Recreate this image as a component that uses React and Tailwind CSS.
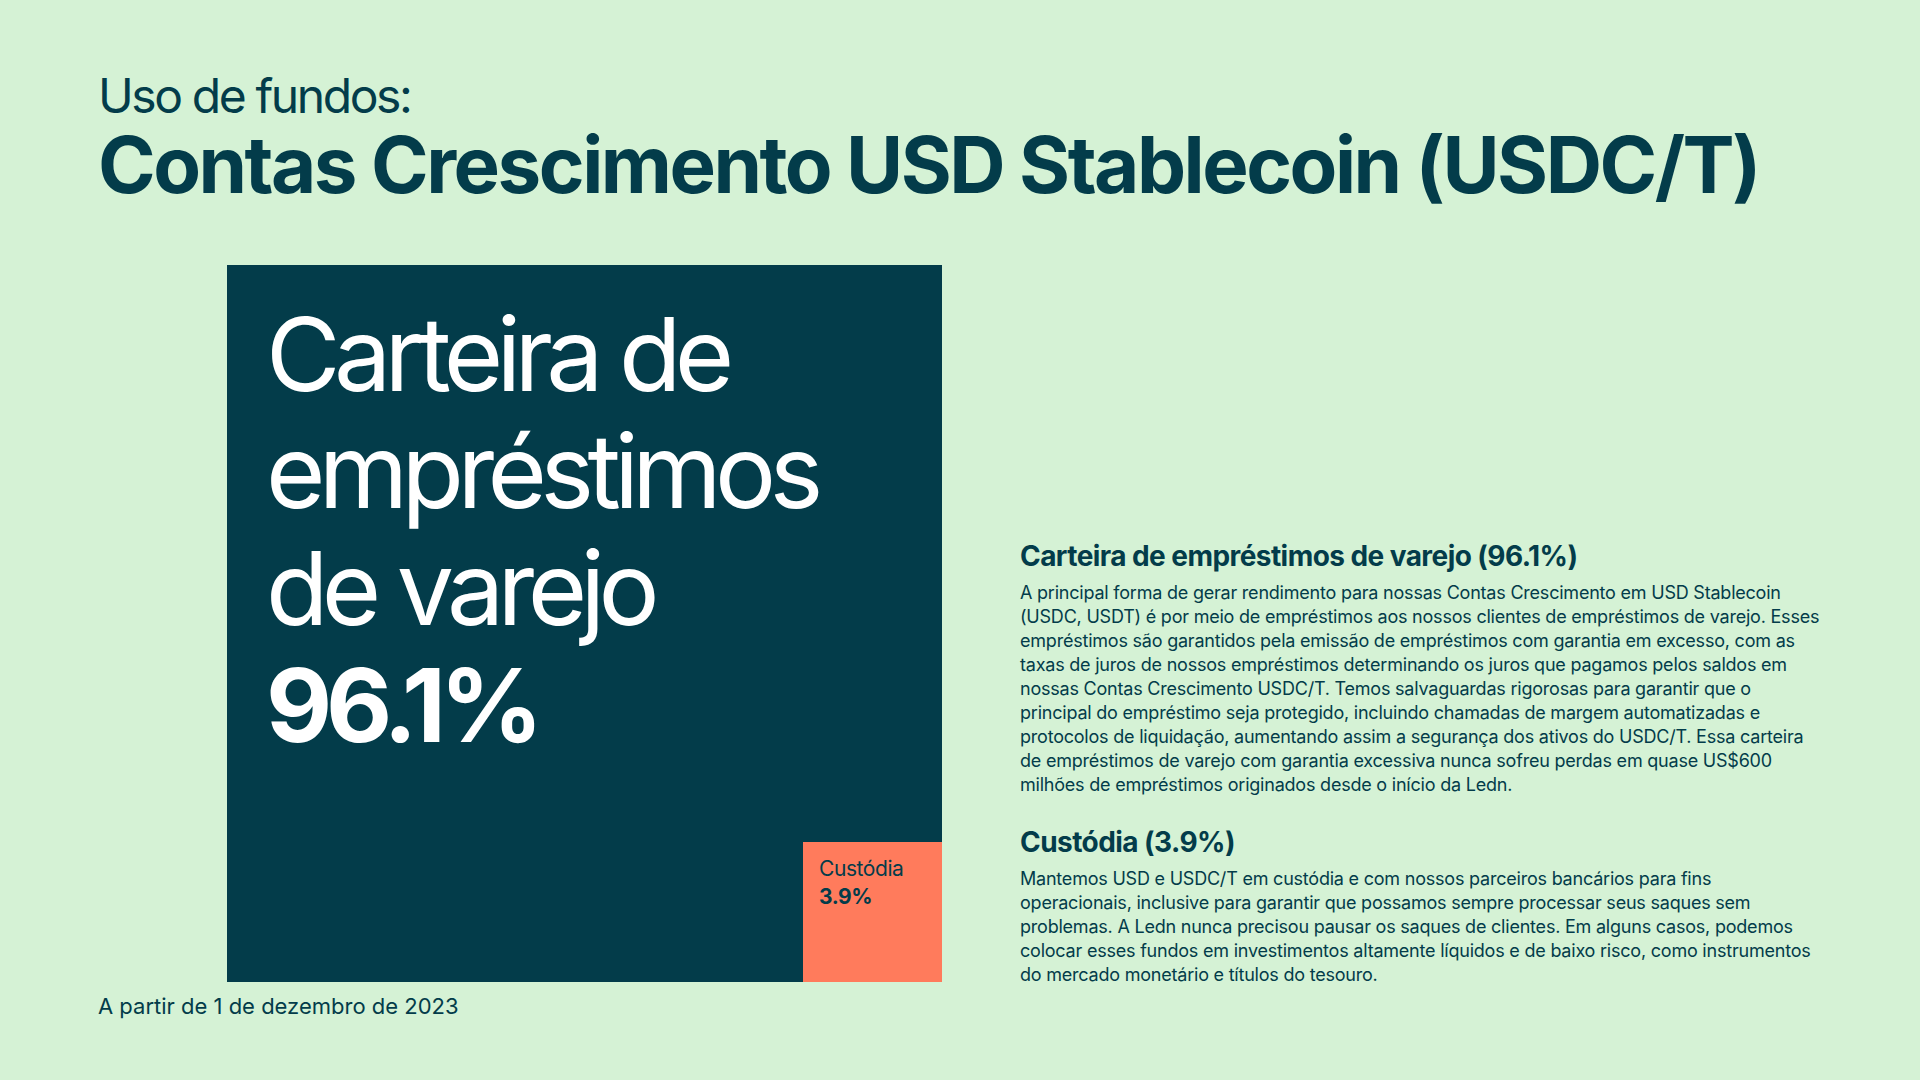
const inter = { fontFamily: "Inter, 'Liberation Sans', sans-serif" };

const paragraphOne = [
  "A principal forma de gerar rendimento para nossas Contas Crescimento em USD Stablecoin",
  "(USDC, USDT) é por meio de empréstimos aos nossos clientes de empréstimos de varejo. Esses",
  "empréstimos são garantidos pela emissão de empréstimos com garantia em excesso, com as",
  "taxas de juros de nossos empréstimos determinando os juros que pagamos pelos saldos em",
  "nossas Contas Crescimento USDC/T. Temos salvaguardas rigorosas para garantir que o",
  "principal do empréstimo seja protegido, incluindo chamadas de margem automatizadas e",
  "protocolos de liquidação, aumentando assim a segurança dos ativos do USDC/T. Essa carteira",
  "de empréstimos de varejo com garantia excessiva nunca sofreu perdas em quase US$600",
  "milhões de empréstimos originados desde o início da Ledn.",
];

const paragraphTwo = [
  "Mantemos USD e USDC/T em custódia e com nossos parceiros bancários para fins",
  "operacionais, inclusive para garantir que possamos sempre processar seus saques sem",
  "problemas. A Ledn nunca precisou pausar os saques de clientes. Em alguns casos, podemos",
  "colocar esses fundos em investimentos altamente líquidos e de baixo risco, como instrumentos",
  "do mercado monetário e títulos do tesouro.",
];

const Lines = ({ lines }) => (
  <p className="mt-2 text-[18px] leading-[24px] tracking-[-0.012em] text-[#033c4a]">
    {lines.map((line, i) => (
      <span key={i} className="block whitespace-nowrap">
        {line}
      </span>
    ))}
  </p>
);

const App = () => {
  return (
    <section
      className="w-[1920px] h-[1080px] bg-[#d5f2d5] text-[#033c4a] pl-[98px] pt-[70px] overflow-hidden"
      style={inter}
    >
      <h2 className="text-[48px] leading-[52px] tracking-[-0.05em]">Uso de fundos:</h2>
      <h1 className="mt-[3px] text-[78px] leading-[80px] font-bold tracking-[-0.032em] whitespace-nowrap">
        Contas Crescimento USD Stablecoin (USDC/T)
      </h1>

      <div className="flex mt-[60px]">
        <div className="ml-[129px]">
          <div className="w-[715px] h-[717px] bg-[#033c4a] flex flex-col">
            <div className="pl-[39px] pt-[31px] text-white text-[102px] leading-[117px] tracking-[-0.065em]">
              <div>Carteira de</div>
              <div>empréstimos</div>
              <div>de varejo</div>
              <div className="font-bold tracking-[-0.06em]">96.1%</div>
            </div>
            <div className="mt-auto self-end w-[139px] h-[140px] bg-[#ff7b5c] px-4 pt-[13px] text-[21px] leading-[28px] tracking-[-0.02em] text-[#033c4a]">
              <div>Custódia</div>
              <div className="font-bold">3.9%</div>
            </div>
          </div>
          <p className="mt-[10px] -ml-[129px] text-[22px] leading-[28px]">
            A partir de 1 de dezembro de 2023
          </p>
        </div>

        <div className="ml-[78px] w-[800px] pt-[274px]">
          <h3 className="text-[28px] leading-[34px] font-bold tracking-[-0.02em]">
            Carteira de empréstimos de varejo (96.1%)
          </h3>
          <Lines lines={paragraphOne} />
          <h3 className="mt-7 text-[28px] leading-[34px] font-bold tracking-[-0.02em]">
            Custódia (3.9%)
          </h3>
          <Lines lines={paragraphTwo} />
        </div>
      </div>
    </section>
  );
};

export default App;
